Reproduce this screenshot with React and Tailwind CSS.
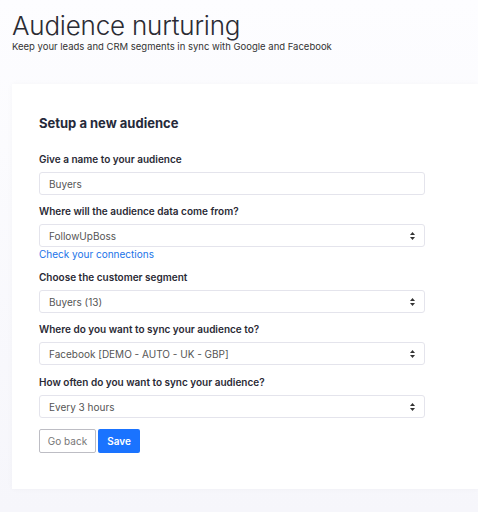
import React from 'react';

function Arrows() {
  return (
    <svg width="7" height="10" viewBox="0 0 7 10" className="text-[#333]">
      <path d="M3.5 1 L6 4 H1 Z" fill="currentColor" />
      <path d="M3.5 9 L6 6 H1 Z" fill="currentColor" />
    </svg>
  );
}

function Field({ label, value, select, children }) {
  return (
    <div className="flex flex-col">
      <label className="text-[10px] font-semibold text-[#2a2a35] leading-[13px] mb-[6px]">{label}</label>
      <div className="h-[23px] w-[386px] bg-white border border-[#e4e4ec] rounded-[3px] flex items-center justify-between pl-[9px] pr-[8px]">
        <span className="text-[10px] text-[#555] leading-none">{value}</span>
        {select && <Arrows />}
      </div>
      {children}
    </div>
  );
}

export default function App() {
  return (
    <div
      className="w-[478px] h-[512px] overflow-hidden bg-gradient-to-b from-[#fdfdff] to-[#f6f6fb] text-[#222]"
      style={{ fontFamily: 'Inter, "Noto Sans", sans-serif' }}
    >
      {/* Header */}
      <div className="pl-[12px] pt-[12px]">
        <h1 className="text-[26px] font-light leading-[28px] text-[#2b2b33] tracking-[-0.2px]">Audience nurturing</h1>
        <p className="text-[9.5px] text-[#333] leading-[12px] mt-[1px]">Keep your leads and CRM segments in sync with Google and Facebook</p>
      </div>

      {/* Card */}
      <div className="ml-[12px] mt-[31px] h-[405px] bg-white shadow-[0_0_6px_rgba(0,0,0,0.03)] pl-[27px] pt-[31px]">
        <h2 className="text-[13px] font-bold text-[#262a3a] leading-[16px] mb-[22px]">Setup a new audience</h2>
        <div className="flex flex-col gap-[10px]">
          <Field label="Give a name to your audience" value="Buyers" />
          <Field label="Where will the audience data come from?" value="FollowUpBoss" select>
            <a className="text-[10px] text-[#1a73e8] leading-[13px] mt-[1px]">Check your connections</a>
          </Field>
          <Field label="Choose the customer segment" value="Buyers (13)" select />
          <div className="flex flex-col gap-[11px]">
            <Field label="Where do you want to sync your audience to?" value="Facebook [DEMO - AUTO - UK - GBP]" select />
            <Field label="How often do you want to sync your audience?" value="Every 3 hours" select />
          </div>
        </div>
        <div className="flex gap-[2px] mt-[11px]">
          <button className="h-[24px] w-[57px] border border-[#bdbdc4] rounded-[2px] text-[10px] text-[#777] bg-white">Go back</button>
          <button className="h-[24px] w-[42px] rounded-[2px] text-[10px] font-semibold text-white bg-[#1a73ff]">Save</button>
        </div>
      </div>
    </div>
  );
}
